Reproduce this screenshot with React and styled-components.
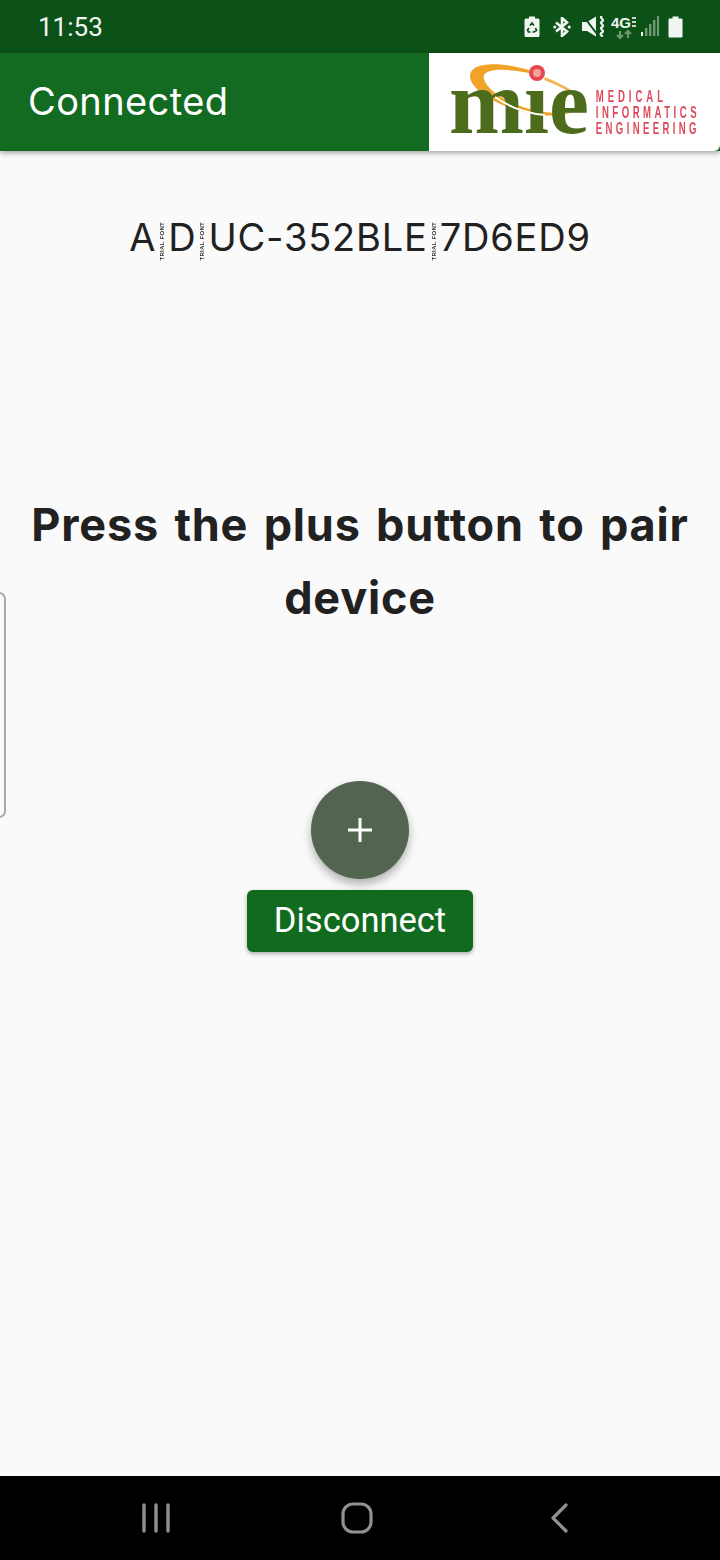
import React from "react";
import styled, { createGlobalStyle } from "styled-components";

const GlobalStyle = createGlobalStyle`
  html, body {
    margin: 0;
    padding: 0;
    background: #fafafa;
  }
`;

const Screen = styled.div`
  position: relative;
  width: 720px;
  height: 1560px;
  display: flex;
  flex-direction: column;
  overflow: hidden;
  background: #fafafa;
  font-family: Roboto, sans-serif;
`;

const StatusBar = styled.div`
  height: 53px;
  flex: none;
  display: flex;
  align-items: center;
  justify-content: space-between;
  padding: 0 37px 0 38px;
  background: #0c5118;
  color: #f1f5f1;
`;

const Clock = styled.span`
  font-size: 26px;
`;

const StatusIcons = styled.div`
  display: flex;
  align-items: center;
`;

const StatusSlot = styled.div`
  display: flex;
  margin-left: ${(p) => p.$gap}px;
`;

const AppBar = styled.header`
  position: relative;
  z-index: 1;
  height: 98px;
  flex: none;
  display: flex;
  align-items: stretch;
  justify-content: space-between;
  background: #126b21;
  box-shadow: 0 2px 5px rgba(0, 0, 0, 0.35);
`;

const AppTitle = styled.h1`
  margin: 0;
  padding: 0 0 3px 28px;
  align-self: center;
  font-family: Inter, sans-serif;
  font-size: 38px;
  font-weight: 400;
  letter-spacing: 0.4px;
  color: #fff;
`;

const LogoBox = styled.div`
  width: 291px;
  background: #fff;
  border-bottom-right-radius: 6px;
`;

const Content = styled.main`
  flex: 1;
  display: flex;
  flex-direction: column;
  align-items: center;
  padding: 64px 16px 0;
`;

const DeviceName = styled.div`
  display: flex;
  align-items: center;
  height: 44px;
  font-family: Inter, sans-serif;
  font-size: 38px;
  font-weight: 400;
  letter-spacing: 0.8px;
  color: #212121;
`;

const TrialMark = styled.span`
  writing-mode: vertical-rl;
  transform: rotate(180deg);
  margin: 8px 3px 0 3px;
  font-family: "Liberation Sans", sans-serif;
  font-size: 6px;
  font-weight: 700;
  letter-spacing: 0.3px;
  line-height: 6px;
  white-space: nowrap;
  color: #333;
`;

const Message = styled.h2`
  margin: 229px 0 0;
  font-family: Inter, sans-serif;
  font-size: 45px;
  font-weight: 700;
  letter-spacing: 0.8px;
  word-spacing: 4px;
  line-height: 73px;
  text-align: center;
  color: #212121;
`;

const Fab = styled.button`
  width: 98px;
  height: 98px;
  margin-top: 147px;
  padding: 0;
  display: flex;
  align-items: center;
  justify-content: center;
  border: none;
  border-radius: 50%;
  background: #536451;
  box-shadow: 0 5px 10px rgba(0, 0, 0, 0.3);
`;

const DisconnectButton = styled.button`
  width: 226px;
  height: 62px;
  margin-top: 11px;
  padding: 0 0 3px;
  border: none;
  border-radius: 6px;
  background: #116b1f;
  color: #fff;
  font-family: Roboto, sans-serif;
  font-size: 34.5px;
  box-shadow: 0 2px 4px rgba(0, 0, 0, 0.3);
`;

const SideTab = styled.div`
  position: absolute;
  left: -22px;
  top: 592px;
  width: 24px;
  height: 222px;
  border: 2px solid #a9a9a9;
  border-radius: 7px;
`;

const NavBar = styled.nav`
  height: 84px;
  flex: none;
  display: flex;
  align-items: center;
  padding: 0 0 0 142px;
  background: #000;
`;

const NavSlot = styled.div`
  display: flex;
  align-items: center;
  margin-left: ${(p) => p.$gap}px;
`;

const BatterySaverIcon = () => (
  <svg width="16" height="22" viewBox="0 0 16 22">
    <path d="M5 0.5h6v2h3a1.5 1.5 0 0 1 1.5 1.5v15.5a1.5 1.5 0 0 1-1.5 1.5H2a1.5 1.5 0 0 1-1.5-1.5V4A1.5 1.5 0 0 1 2 2.5h3z" fill="#f1f5f1" />
    <path d="M6 9.5L8 7l2 2.5M11.5 12l1 2.5-2.5 1.5H8.5M6.5 16H4.5l-1-2 1.5-2" fill="none" stroke="#0c5118" strokeWidth="1.7" />
  </svg>
);

const BluetoothIcon = () => (
  <svg width="18" height="20" viewBox="0 0 18 20">
    <path d="M3 5.5L14 14.5L9 19V1L14 5.5L3 14.5" fill="none" stroke="#f1f5f1" strokeWidth="2.6" />
    <circle cx="1.8" cy="10" r="1.6" fill="#f1f5f1" />
    <circle cx="16.2" cy="10" r="1.6" fill="#f1f5f1" />
  </svg>
);

const MuteIcon = () => (
  <svg width="23" height="21" viewBox="0 0 23 21">
    <path d="M0 6h5l9-5.5v20L5 15H0z" fill="#f1f5f1" />
    <path d="M2 1l13 17" stroke="#0c5118" strokeWidth="2" />
    <path d="M20 0c-3.5 2 3.5 3.5 0 5.5s3.5 3.5 0 5.5 3.5 3.5 0 5.5 1 4 1 4" fill="none" stroke="#f1f5f1" strokeWidth="2.2" />
  </svg>
);

const NetworkIcon = () => (
  <svg width="26" height="28" viewBox="0 0 26 28">
    <text x="0" y="14.5" fontFamily="'Liberation Sans', sans-serif" fontWeight="700" fontSize="15" fill="#f1f5f1">4G</text>
    <path d="M21 5h4M21 9h4M21 13h4" stroke="#c8d8c8" strokeWidth="1.8" />
    <path d="M9 18v7M6 22l3 3 3-3M17 25v-7M14 21l3-3 3 3" fill="none" stroke="#6f9a74" strokeWidth="2" />
  </svg>
);

const SignalIcon = () => (
  <svg width="18" height="21" viewBox="0 0 18 21">
    <rect x="0" y="16" width="2" height="4" fill="#f1f5f1" />
    <rect x="4" y="12" width="2.4" height="8" fill="#6f9a74" />
    <rect x="8" y="8" width="2.4" height="12" fill="#6f9a74" />
    <rect x="12" y="4" width="2.4" height="16" fill="#6f9a74" />
    <rect x="16" y="0" width="2" height="20" fill="#6f9a74" />
  </svg>
);

const BatteryIcon = () => (
  <svg width="15" height="22" viewBox="0 0 15 22">
    <path d="M4.5 0.5h6v2h3a1 1 0 0 1 1 1v17a1 1 0 0 1-1 1h-12a1 1 0 0 1-1-1v-17a1 1 0 0 1 1-1h3z" fill="#f1f5f1" />
  </svg>
);

const MieLogo = () => (
  <svg width="291" height="98" viewBox="0 0 291 98">
    <g style={{ filter: "blur(0.5px)" }}>
      <path d="M100 17C72 9 40 8 41 24C42 38 74 56 104 61C120 64 135 62 146 59C130 61 118 60 104 57C80 51 58 38 55 26C52 15 76 15 100 20Z" fill="#f0a326" />
      <path d="M116 24C128 29 140 35 148 41L146 42C136 36 126 31 115 27Z" fill="#f0b552" />
      <text x="20" y="80" fontFamily="'Liberation Serif', serif" fontWeight="700" fontSize="90" fill="#4c6b1b">mıe</text>
      <path d="M66 44C80 54 96 60 116 62" fill="none" stroke="#fff" strokeWidth="2" />
      <circle cx="108" cy="20" r="8" fill="#e5464f" />
      <circle cx="108" cy="20" r="4" fill="#f6a09a" />
      <g transform="scale(0.6 1)" fontFamily="'Liberation Sans', sans-serif" fontWeight="700" fontSize="16" fill="#df4a5c">
        <text x="278" y="49" textLength="112">MEDICAL</text>
        <text x="278" y="65" textLength="168">INFORMATICS</text>
        <text x="278" y="81" textLength="168">ENGINEERING</text>
      </g>
    </g>
  </svg>
);

const PlusIcon = () => (
  <svg width="26" height="26" viewBox="0 0 26 26">
    <path d="M13 1v24M1 13h24" stroke="#fff" strokeWidth="3" />
  </svg>
);

const RecentsIcon = () => (
  <svg width="28" height="30" viewBox="0 0 28 30">
    <path d="M2 2v26M14 2v26M26 2v26" stroke="#919191" strokeWidth="3.4" strokeLinecap="round" />
  </svg>
);

const HomeIcon = () => (
  <svg width="32" height="32" viewBox="0 0 32 32">
    <rect x="2" y="2" width="28" height="28" rx="10" fill="none" stroke="#919191" strokeWidth="3.2" />
  </svg>
);

const BackIcon = () => (
  <svg width="20" height="32" viewBox="0 0 20 32">
    <path d="M16 3L3 16l13 13" fill="none" stroke="#919191" strokeWidth="3.2" strokeLinecap="round" strokeLinejoin="round" />
  </svg>
);

const App = () => (
  <Screen>
    <GlobalStyle />
    <StatusBar>
      <Clock>11:53</Clock>
      <StatusIcons>
        <StatusSlot $gap={0}>
          <BatterySaverIcon />
        </StatusSlot>
        <StatusSlot $gap={13}>
          <BluetoothIcon />
        </StatusSlot>
        <StatusSlot $gap={11}>
          <MuteIcon />
        </StatusSlot>
        <StatusSlot $gap={6}>
          <NetworkIcon />
        </StatusSlot>
        <StatusSlot $gap={4}>
          <SignalIcon />
        </StatusSlot>
        <StatusSlot $gap={9}>
          <BatteryIcon />
        </StatusSlot>
      </StatusIcons>
    </StatusBar>
    <AppBar>
      <AppTitle>Connected</AppTitle>
      <LogoBox>
        <MieLogo />
      </LogoBox>
    </AppBar>
    <Content>
      <DeviceName>
        A<TrialMark>TRIAL FONT</TrialMark>D<TrialMark>TRIAL FONT</TrialMark>UC-352BLE
        <TrialMark>TRIAL FONT</TrialMark>7D6ED9
      </DeviceName>
      <Message>Press the plus button to pair device</Message>
      <Fab>
        <PlusIcon />
      </Fab>
      <DisconnectButton>Disconnect</DisconnectButton>
    </Content>
    <SideTab />
    <NavBar>
      <NavSlot $gap={0}>
        <RecentsIcon />
      </NavSlot>
      <NavSlot $gap={171}>
        <HomeIcon />
      </NavSlot>
      <NavSlot $gap={177}>
        <BackIcon />
      </NavSlot>
    </NavBar>
  </Screen>
);

export default App;
